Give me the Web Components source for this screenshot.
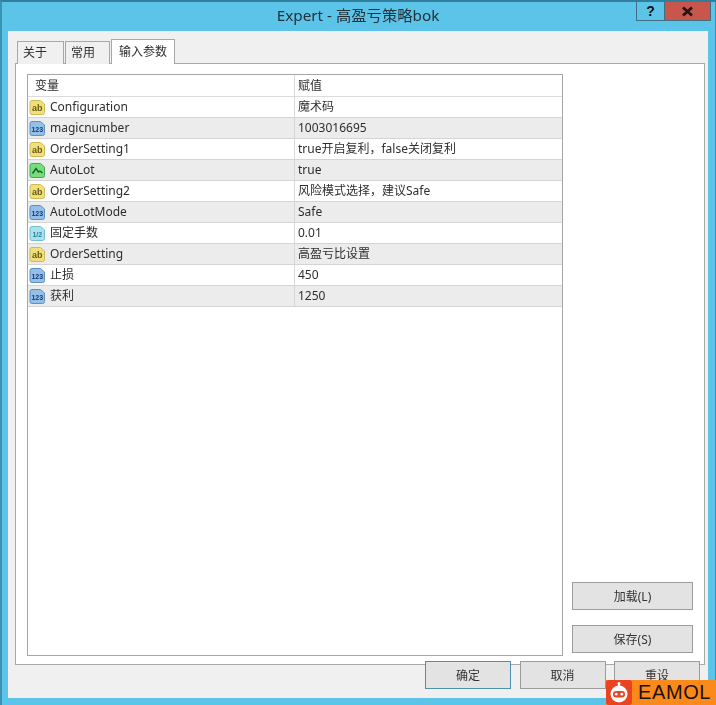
<!DOCTYPE html>
<html lang="zh">
<head>
<meta charset="utf-8">
<title>Expert</title>
<style>
html,body{margin:0;height:705px;overflow:hidden;background:#5cc4e8}
body{font-family:"Noto Sans","Noto Sans CJK SC",sans-serif;color:#2e2e2e}
</style>
</head>
<body>
<expert-window wintitle="Expert - 高盈亏策略bok">
  <expert-tabs>
    <param-list>
      <param-row type="ab" name="Configuration" value="魔术码"></param-row>
      <param-row type="123" name="magicnumber" value="1003016695"></param-row>
      <param-row type="ab" name="OrderSetting1" value="true开启复利，false关闭复利"></param-row>
      <param-row type="bool" name="AutoLot" value="true"></param-row>
      <param-row type="ab" name="OrderSetting2" value="风险模式选择，建议Safe"></param-row>
      <param-row type="123" name="AutoLotMode" value="Safe"></param-row>
      <param-row type="dbl" name="固定手数" value="0.01"></param-row>
      <param-row type="ab" name="OrderSetting" value="高盈亏比设置"></param-row>
      <param-row type="123" name="止损" value="450"></param-row>
      <param-row type="123" name="获利" value="1250"></param-row>
    </param-list>
    <win-button slot="side" wide>加载(L)</win-button>
    <win-button slot="side" wide>保存(S)</win-button>
  </expert-tabs>
  <win-button slot="footer" primary>确定</win-button>
  <win-button slot="footer">取消</win-button>
  <win-button slot="footer">重设</win-button>
</expert-window>
<eamol-mark></eamol-mark>

<script>
//ventana con barra de titulo
class expertWindow extends HTMLElement{
  constructor(){
    super()
    this.attachShadow({mode:"open"})
  }
  connectedCallback(){
    this.shadowRoot.innerHTML=`<style>
      :host{display:flex;flex-direction:column;box-sizing:border-box;height:705px;padding:0 7px 7px 6px;
        background:#5cc4e8;border-top:2px solid #2f7f9c;border-left:2px solid #3a93b3;border-right:1px solid #3a93b3}
      .bar{display:grid;grid-template-columns:1fr auto 1fr;height:29px;flex:none}
      .title{grid-column:2;font-size:15.300px;line-height:27px;color:#22323a;filter:blur(.35px)}
      .ctrl{grid-column:3;justify-self:end;display:flex;height:19px;margin-right:-3px}
      .ctrl div{display:flex;align-items:center;justify-content:center;box-sizing:border-box;height:19px;font:bold 14px "Liberation Sans",sans-serif;color:#111;border:1px solid #3f6f82;border-top:0}
      .help{width:29px}
      .close{width:46px;background:#c8564c;border-left:0 !important}
      .body{flex:1;display:flex;flex-direction:column;background:#f0f0f0;min-height:0}
      .foot{display:flex;justify-content:flex-end;gap:8.500px;padding:0 8px 9px 0;margin-top:-4px;position:relative}
    </style>
    <div class="bar">
      <div class="title">${this.getAttribute("wintitle")}</div>
      <div class="ctrl"><div class="help">?</div><div class="close">
        <svg width="13" height="11" viewBox="0 0 13 11"><path d="M2 1.500 11 9.500M11 1.500 2 9.500" stroke="#2a1512" stroke-width="2.800"/></svg>
      </div></div>
    </div>
    <div class="body">
      <slot></slot>
      <div class="foot"><slot name="footer"></slot></div>
    </div>`
  }
}

//pestañas y panel
class expertTabs extends HTMLElement{
  constructor(){
    super()
    this.attachShadow({mode:"open"})
  }
  connectedCallback(){
    this.shadowRoot.innerHTML=`<style>
      :host{display:flex;flex-direction:column;flex:1;min-height:0;margin:9px 3px 0 7px;font-size:12px}
      .tabs{display:flex;align-items:flex-end;padding-left:2px;height:24px;position:relative;z-index:1;margin-bottom:-1px}
      .tab{box-sizing:border-box;height:23px;border:1px solid #a8a8a8;border-bottom:0;background:#f0f0f0;
        padding:0 5px;line-height:22px;margin-right:1px;filter:blur(.3px)}
      .tab.on{height:25px;background:#fff;padding:0 7px;line-height:23px;border-width:1.500px 1.500px 0}
      .panel{flex:1;min-height:0;display:grid;grid-template-columns:536px 121px;gap:9px;box-sizing:border-box;
        padding:10px 11px 8px 11px;background:#fff;border:1px solid #a8a8a8}
      .side{display:flex;flex-direction:column;justify-content:flex-end;gap:15px;padding-bottom:3px}
    </style>
    <div class="tabs">
      <div class="tab" style="width:47px">关于</div>
      <div class="tab" style="width:45px">常用</div>
      <div class="tab on" style="width:64px">输入参数</div>
    </div>
    <div class="panel">
      <slot></slot>
      <div class="side"><slot name="side"></slot></div>
    </div>`
  }
}

//tabla de parametros
class paramList extends HTMLElement{
  constructor(){
    super()
    this.attachShadow({mode:"open"})
  }
  connectedCallback(){
    this.shadowRoot.innerHTML=`<style>
      :host{display:block;box-sizing:border-box;border:1.500px solid #a6a6a6;background:#fff;overflow:hidden}
      .head{display:grid;grid-template-columns:266px 1fr;height:22px;line-height:22px;font-size:12px;border-bottom:1px solid #dcdcdc;box-sizing:border-box}
      .head div{padding-left:7px;filter:blur(.35px)}
      .head div+div{border-left:1px solid #d8d8d8;padding-left:3px}
    </style>
    <div class="head"><div>变量</div><div>赋值</div></div>
    <slot></slot>`
  }
}

class paramRow extends HTMLElement{
  constructor(){
    super()
    this.attachShadow({mode:"open"})
  }
  //icono segun el tipo del parametro
  icon(type){
    const kinds={
      ab:{fill:"#efe07c",edge:"#cdbb55",label:"ab",ink:"#6a5a10"},
      "123":{fill:"#93bfe9",edge:"#5c8fc4",label:"123",ink:"#123c74"},
      dbl:{fill:"#a9e2ee",edge:"#73bdd0",label:"1/2",ink:"#2f7f95"},
    }
    const tag=(fill,edge)=>`<path d="M3 1.500h8.500l4 3.500v8.500a2 2 0 0 1-2 2H3a2 2 0 0 1-2-2v-10a2 2 0 0 1 2-2z" fill="${fill}" stroke="${edge}"/>`
    if(type=="bool"){
      return `<svg width="17" height="17" viewBox="0 0 17 17">${tag("#74de7c","#48a854")}<path d="M3.500 11.500 7 6.500l2.500 3.500 1.500-1 2.500 2" fill="none" stroke="#1d5a28" stroke-width="1.400"/></svg>`
    }
    const k=kinds[type]
    return `<svg width="17" height="17" viewBox="0 0 17 17">${tag(k.fill,k.edge)}<text x="8.300" y="11.800" text-anchor="middle" font-size="${k.label.length>2?7:9}" font-weight="700" font-family="Liberation Sans" fill="${k.ink}">${k.label}</text></svg>`
  }
  connectedCallback(){
    const odd=[...this.parentNode.children].indexOf(this)%2==1
    this.shadowRoot.innerHTML=`<style>
      :host{display:grid;grid-template-columns:266px 1fr;height:21px;box-sizing:border-box;font-size:12px;line-height:20px;
        border-bottom:1px solid #d4d4d4;background:${odd?"#ececec":"#fff"}}
      .name{display:flex;align-items:center;gap:4px;padding-left:1px}
      .name svg{flex:none;filter:blur(.4px)}
      .val{border-left:1px solid #d8d8d8;padding-left:3px;white-space:nowrap}
      span,.val{filter:blur(.3px)}
    </style>
    <div class="name">${this.icon(this.getAttribute("type"))}<span>${this.getAttribute("name")}</span></div>
    <div class="val">${this.getAttribute("value")}</div>`
  }
}

//boton de windows
class winButton extends HTMLElement{
  constructor(){
    super()
    this.attachShadow({mode:"open"})
  }
  connectedCallback(){
    const wide=this.hasAttribute("wide")
    const edge=this.hasAttribute("primary")?"#4f8fae":"#9c9c9c"
    this.shadowRoot.innerHTML=`<style>
      :host{display:flex;align-items:center;justify-content:center;box-sizing:border-box;flex:none;
        width:${wide?"121px":"86px"};height:28px;background:#e3e3e3;border:1.500px solid ${edge};font-size:12px;color:#333}
      span{filter:blur(.35px)}
    </style><span><slot></slot></span>`
  }
}

//marca de agua naranja
class eamolMark extends HTMLElement{
  constructor(){
    super()
    this.attachShadow({mode:"open"})
  }
  connectedCallback(){
    this.shadowRoot.innerHTML=`<style>
      :host{position:absolute;right:0;bottom:0;width:110px;height:25px;background:#fb8a1c;display:flex;align-items:center;gap:6px;box-sizing:border-box}
      svg{flex:none}
      span{font:500 20px/25px "Liberation Sans",sans-serif;color:#1c1008;letter-spacing:.6px;white-space:nowrap}
    </style>
    <svg width="26" height="25" viewBox="0 0 26 25">
      <rect width="26" height="25" rx="3" fill="#e9431f"/>
      <path d="M13 3v4" stroke="#fff" stroke-width="2"/><circle cx="13" cy="3.500" r="1.500" fill="#fff"/>
      <circle cx="13" cy="14" r="8.500" fill="#fff"/>
      <rect x="7" y="11" width="12" height="6.500" rx="3.200" fill="#e9431f"/>
      <circle cx="10.200" cy="14.200" r="1.400" fill="#fff"/><circle cx="15.800" cy="14.200" r="1.400" fill="#fff"/>
    </svg><span>EAMOL</span>`
  }
}

customElements.define("expert-window",expertWindow)
customElements.define("expert-tabs",expertTabs)
customElements.define("param-list",paramList)
customElements.define("param-row",paramRow)
customElements.define("win-button",winButton)
customElements.define("eamol-mark",eamolMark)
</script>
</body>
</html>
